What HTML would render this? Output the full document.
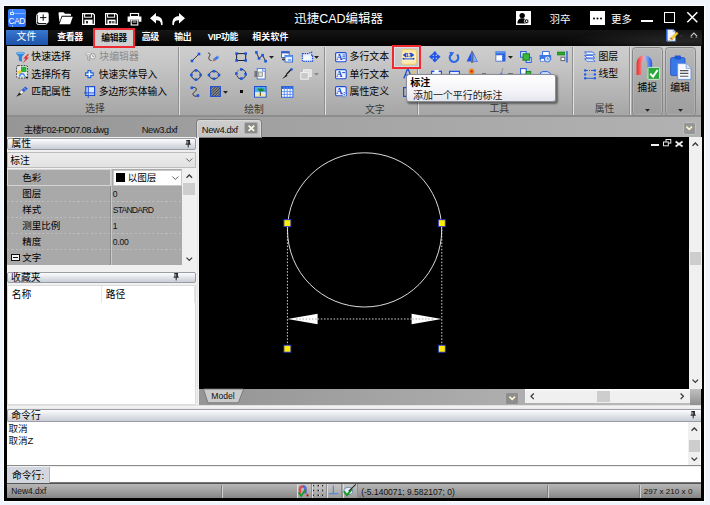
<!DOCTYPE html>
<html lang="zh-CN">
<head>
<meta charset="utf-8">
<title>迅捷CAD编辑器</title>
<style>
html,body{margin:0;padding:0;}
body{width:710px;height:505px;overflow:hidden;background:#f0f4fd;position:relative;
 font-family:"Liberation Sans","Noto Sans CJK SC",sans-serif;font-size:10px;color:#000;}
.a{position:absolute;box-sizing:border-box;}
.t{position:absolute;white-space:nowrap;line-height:14px;}
svg{overflow:visible;}
.hdr{background:linear-gradient(#fdfdfe,#e4e7ec 45%,#c9cdd5);border:1px solid #9a9da3;border-radius:2px;}
</style>
</head>
<body>
<div class="a " style="left:3.9px;top:5.9px;width:700px;height:494.7px;background:#000;box-shadow:0 0 0 1.200px #fff;"></div>
<div class="a " style="left:6px;top:6px;width:695.5px;height:24px;background:#000;"></div>
<div class="a " style="left:6px;top:30px;width:695.5px;height:16px;background:linear-gradient(#151515,#030303);"></div>
<div class="a " style="left:560px;top:30px;width:141.5px;height:16px;background:radial-gradient(ellipse at 85% 70%,rgba(60,60,60,0.6),rgba(0,0,0,0) 70%);"></div>
<div class="a " style="left:6.5px;top:45.5px;width:694.7px;height:70px;background:linear-gradient(#cecece,#c6c6c6 25%,#b3b3b3 70%,#a5a5a5);"></div>
<div class="a " style="left:6.5px;top:116px;width:694.7px;height:21.2px;background:linear-gradient(90deg,#969696,#a2a2a2 40%,#b2b2b2);"></div>
<div class="a " style="left:6.5px;top:114.8px;width:694.7px;height:2.4px;background:linear-gradient(#a0a0a0,#878787 35%,#898989 65%,#969696);"></div>
<div class="a " style="left:6.5px;top:137.2px;width:192px;height:271px;background:#f0f0f0;"></div>
<div class="a " style="left:199px;top:137.2px;width:490px;height:252px;background:#000;"></div>
<div class="a " style="left:689px;top:137.2px;width:13px;height:252px;background:#f0f0f0;"></div>
<div class="a " style="left:199px;top:389.2px;width:502.2px;height:16px;background:linear-gradient(90deg,#959595,#a9a9a9 50%,#bdbdbd);"></div>
<div class="a " style="left:6.5px;top:404.7px;width:694.7px;height:79.3px;background:#f0f0f0;"></div>
<div class="a " style="left:6.5px;top:484px;width:694.7px;height:14.3px;background:linear-gradient(#b6b6b6,#a0a0a0 50%,#858585);"></div>
<div class="a " style="left:8px;top:9px;width:18px;height:18px;background:linear-gradient(#3a86ff,#2a6cf0);border-radius:2px;"></div>
<div class="a " style="left:10.4px;top:11.8px;width:3.6px;height:3.6px;border:1px solid #d6e6ff;"></div>
<div class="a " style="left:14px;top:13.2px;width:11px;height:1px;background:#7fb0ff;"></div>
<div class="a " style="left:11.7px;top:9.4px;width:1px;height:2.4px;background:#7fb0ff;"></div>
<div class="a " style="left:11.7px;top:24.6px;width:1px;height:2.0px;background:#7fb0ff;"></div>
<div class="t " style="left:8.6px;top:13.8px;font-size:8.4px;color:#fff;letter-spacing:-0.450px;">CAD</div>
<svg class="a" style="left:36px;top:12px" width="13" height="13" viewBox="0 0 13 13"><rect x="0.600" y="2" width="10.400" height="10.400" rx="1.500" fill="none" stroke="#fff" stroke-width="0.900"/><rect x="1.700" y="0.200" width="11" height="10.700" rx="1.700" fill="#fff"/><path d="M7.200 2.400v6.400M4 5.600h6.400" stroke="#000" stroke-width="0.950"/></svg>
<svg class="a" style="left:58px;top:12px" width="15" height="13" viewBox="0 0 15 13"><path d="M0.5 1.2q0-1 1-1h4l1.5 1.6h5.2q0.8 0 0.8 0.8v1.2h-9.3l-2.2 6.5z" fill="#fff"/><path d="M4.2 4.8h10.6l-2.6 7.4h-10.8z" fill="#fff"/></svg>
<svg class="a" style="left:82px;top:13px" width="13" height="12" viewBox="0 0 13 12"><path d="M0.6 0.6h10.4l1.4 1.4v9.4h-11.8z" fill="none" stroke="#fff" stroke-width="1.2"/><rect x="2.6" y="0.6" width="7" height="3.6" fill="none" stroke="#fff" stroke-width="1"/><rect x="2.4" y="6.6" width="8.2" height="4.8" fill="#fff"/><rect x="4.2" y="8" width="1.6" height="2.4" fill="#000"/></svg>
<svg class="a" style="left:105px;top:13px" width="13" height="12" viewBox="0 0 13 12"><path d="M0.6 0.6h10.4l1.4 1.4v9.4h-11.8z" fill="none" stroke="#fff" stroke-width="1.2"/><rect x="2.6" y="0.6" width="7" height="3.6" fill="none" stroke="#fff" stroke-width="1"/><rect x="2.4" y="6.6" width="8.2" height="4.8" fill="#fff"/><rect x="4.2" y="8" width="1.6" height="2.4" fill="#000"/><rect x="6.6" y="8" width="3" height="2.4" fill="#000" opacity="0.6"/></svg>
<svg class="a" style="left:127px;top:13px" width="15" height="13" viewBox="0 0 15 13"><rect x="3.4" y="0.5" width="8.2" height="3" fill="none" stroke="#fff" stroke-width="1.1"/><path d="M0.6 3.6h13.8v5.2h-2.6v-2.4h-8.6v2.4h-2.6z" fill="#fff"/><rect x="4.2" y="7" width="6.6" height="5" fill="none" stroke="#fff" stroke-width="1.1"/><path d="M5.6 9h3.8" stroke="#fff" stroke-width="0.9"/></svg>
<svg class="a" style="left:150px;top:13px" width="13" height="13" viewBox="0 0 13 13"><path d="M0 5.2L6 0v3.2c4.6 0 7 2.6 6.6 8.6c-0.6 0.6-1.2 0.6-1.6 0c0-3.4-1.6-4.8-5-4.6v3.4z" fill="#fff"/></svg>
<svg class="a" style="left:171.5px;top:13px;transform:scaleX(-1)" width="13" height="13" viewBox="0 0 13 13"><path d="M0 5.2L6 0v3.2c4.6 0 7 2.6 6.6 8.6c-0.6 0.6-1.2 0.6-1.6 0c0-3.4-1.6-4.8-5-4.6v3.4z" fill="#fff"/></svg>
<div class="t " style="left:294.2px;top:12.1px;font-size:12.5px;color:#fff;">迅捷CAD编辑器</div>
<div class="a " style="left:516.3px;top:11.2px;width:14.7px;height:14px;background:#fff;"></div>
<svg class="a" style="left:516.3px;top:11.2px" width="14.7" height="14" viewBox="0 0 14.7 14"><circle cx="6.2" cy="4.6" r="2.7" fill="#000"/><path d="M1.4 12.6c0-4 2-5.4 4.8-5.4s4.6 1.4 4.6 5.4z" fill="#000"/><circle cx="10.6" cy="10.2" r="2.3" fill="#000" stroke="#fff" stroke-width="0.8"/><circle cx="10.6" cy="10.2" r="0.9" fill="#fff"/></svg>
<div class="t " style="left:549.5px;top:11.9px;font-size:10.5px;color:#fff;">羽卒</div>
<div class="a " style="left:590px;top:11.2px;width:15px;height:14px;background:#fff;"></div>
<svg class="a" style="left:590px;top:11.2px" width="15" height="14" viewBox="0 0 15 14"><circle cx="4" cy="7.4" r="1" fill="#000"/><circle cx="7.5" cy="7.4" r="1" fill="#000"/><circle cx="11" cy="7.4" r="1" fill="#000"/></svg>
<div class="t " style="left:611px;top:11.9px;font-size:10.5px;color:#fff;">更多</div>
<div class="a " style="left:641.4px;top:19.8px;width:11.6px;height:1.9px;background:#fff;"></div>
<div class="a " style="left:664px;top:12.3px;width:11.2px;height:10.8px;border:1.9px solid #fff;"></div>
<svg class="a" style="left:687px;top:12.4px" width="10.6" height="10.6" viewBox="0 0 10.6 10.6"><path d="M0.3 0.3l10 10M10.3 0.3l-10 10" stroke="#fff" stroke-width="1.5"/></svg>
<div class="a " style="left:6.3px;top:29.6px;width:41.6px;height:15.4px;background:linear-gradient(#3a78d0,#2a63bc 50%,#1f55aa);"></div>
<div class="t " style="left:16.6px;top:30.3px;font-size:9.8px;color:#fff;">文件</div>
<div class="t " style="left:57.2px;top:30.4px;font-size:8.9px;color:#fff;font-weight:bold;letter-spacing:-0.3px;">查看器</div>
<div class="a " style="left:93.4px;top:28px;width:41.6px;height:19.6px;background:#cfcfcf;border:2px solid #ee2a32;"></div>
<div class="t " style="left:101.2px;top:30.5px;font-size:8.9px;color:#111;font-weight:bold;letter-spacing:-0.3px;">编辑器</div>
<div class="t " style="left:141.8px;top:30.4px;font-size:8.9px;color:#fff;font-weight:bold;letter-spacing:-0.3px;">高级</div>
<div class="t " style="left:174.3px;top:30.4px;font-size:8.9px;color:#fff;font-weight:bold;letter-spacing:-0.3px;">输出</div>
<div class="t " style="left:207.8px;top:30.4px;font-size:8.9px;color:#fff;font-weight:bold;letter-spacing:-0.4px;">VIP功能</div>
<div class="t " style="left:252.2px;top:30.4px;font-size:8.9px;color:#fff;font-weight:bold;letter-spacing:0.250px;">相关软件</div>
<svg class="a" style="left:665.8px;top:28.8px" width="12" height="13" viewBox="0 0 12 13"><path d="M0.600 0.400h6.600l2.400 2.400v9.400h-9z" fill="#eef3fc" stroke="#3a6fd0" stroke-width="0.700"/><path d="M0.900 0.600v11.400" stroke="#2a5fd0" stroke-width="1.300"/><path d="M7.200 0.400v2.400h2.400" fill="#c8d8f4" stroke="#6a8fd0" stroke-width="0.500"/><path d="M2.800 12.400l1.200-3l6.800-6.400l1.400 1.600l-6.600 6.600z" fill="#f6cf2a" stroke="#c89a10" stroke-width="0.400"/><path d="M2.800 12.400l1.200-3l1.600 1.800z" fill="#f4f4f4"/><path d="M4.600 8.800l1.600 1.800" stroke="#d82020" stroke-width="1"/><path d="M2.600 12.600l0.700-1.300l0.700 0.700z" fill="#2a4fb0"/></svg>
<svg class="a" style="left:678.8px;top:34.8px" width="5" height="3" viewBox="0 0 5 3"><path d="M0 0h5l-2.500 2.600z" fill="#2c2c2c"/></svg>
<svg class="a" style="left:689.6px;top:31.8px" width="8" height="6.4" viewBox="0 0 8 6.4"><path d="M0.700 4.400l3.200-3.400l3.200 3.400" fill="none" stroke="#d8d8d8" stroke-width="1.100"/><path d="M0.600 5.300h2M5.400 5.300h1.900" stroke="#aaa" stroke-width="0.800"/></svg>
<svg class="a" style="left:15.8px;top:51.6px" width="13.4" height="11.4" viewBox="0 0 13.4 11.4"><path d="M0.300 1.200h8.200l-2.900 3.600v4.600l-2.400-1.200v-3.400z" fill="#2a86e4" stroke="#1a5fc0" stroke-width="0.500"/><ellipse cx="4.400" cy="1.200" rx="4" ry="1" fill="#7cc8ff" stroke="#1a6fd0" stroke-width="0.400"/><path d="M11.600 2.200l-4.200 4.400h2.400l-3 4.600l6.200-5.800h-2.600l2.800-3.200z" fill="#e8222c"/></svg>
<div class="t " style="left:31.3px;top:50.3px;font-size:9.9px;color:#000;">快速选择</div>
<svg class="a" style="left:15.8px;top:65.3px" width="13" height="14" viewBox="0 0 13 14"><rect x="0.600" y="0.600" width="11" height="12.400" rx="1.400" fill="#e9e9e9" stroke="#2a2a2a" stroke-width="0.900" stroke-dasharray="1.700 1.100"/><rect x="5" y="1.800" width="5.400" height="5.200" fill="#2fae3c"/><circle cx="3.800" cy="7.200" r="1.900" fill="#f6cc2e"/><path d="M2.600 11.800c0.400-2.600 1.800-4 3.400-4s3 1.400 3.400 4z" fill="#4a90ee"/><path d="M4.400 11.800c0.300-1.400 1-2.200 1.800-2.200s1.500 0.800 1.800 2.200z" fill="#eef4ff"/><path d="M9 11.400l3.600 0.800l-1.300 0.900l0.300 1.500z" fill="#111"/></svg>
<div class="t " style="left:31.3px;top:67.7px;font-size:9.9px;color:#000;">选择所有</div>
<svg class="a" style="left:15.8px;top:86px" width="12.4" height="11" viewBox="0 0 12.4 11"><path d="M0.300 10.700l3-4.300l2.300 1.900z" fill="#222"/><path d="M3.300 6.400l2.300-2.400l2.300 1.900l-2.300 2.400z" fill="#f2f2f2" stroke="#555" stroke-width="0.500"/><path d="M5.600 4l3.600-3.600l2.700 2.300l-4 3.200z" fill="#2a5fd8"/><path d="M7.600 2l2.600 2.200" stroke="#9fc0ff" stroke-width="0.700"/></svg>
<div class="t " style="left:31.3px;top:85.2px;font-size:9.9px;color:#000;">匹配属性</div>
<svg class="a" style="left:84.6px;top:51.8px" width="11" height="10.6" viewBox="0 0 11 10.6"><path d="M0.300 1.400h6.600l-2.300 3v4.400l-2-1v-3.400z" fill="#cfcfcf" stroke="#8a8a8a" stroke-width="0.600"/><ellipse cx="3.600" cy="1.400" rx="3.200" ry="0.900" fill="#ececec" stroke="#999" stroke-width="0.400"/><circle cx="7.800" cy="4.400" r="2.700" fill="#f2f2f2" stroke="#8c8c8c" stroke-width="0.800"/><path d="M7.800 2.900v1.700h1.400" stroke="#777" stroke-width="0.700" fill="none"/></svg>
<div class="t " style="left:99.3px;top:50.3px;font-size:9.9px;color:#8c8c8c;">块编辑器</div>
<svg class="a" style="left:85.0px;top:70.3px" width="8.8" height="8.4" viewBox="0 0 8.8 8.4"><path d="M3 0.700h2.800v2.200h2.400v2.600h-2.400v2.200h-2.800v-2.200h-2.400v-2.600h2.400z" fill="#f4f8ff" stroke="#1f5fe0" stroke-width="1.150"/></svg>
<div class="t " style="left:98.7px;top:67.7px;font-size:9.75px;color:#000;">快速实体导入</div>
<svg class="a" style="left:84.2px;top:86.4px" width="11.4" height="12" viewBox="0 0 11.4 12"><rect x="1.800" y="0.600" width="8.800" height="8.800" fill="#dbe7ff" stroke="#1f4fd8" stroke-width="1.200"/><path d="M4.300 0.600v11.200M0 6.900h10.600" stroke="#1f4fd8" stroke-width="1"/></svg>
<div class="t " style="left:98.7px;top:85.2px;font-size:9.75px;color:#000;">多边形实体输入</div>
<div class="t " style="left:85.3px;top:102.1px;font-size:9.8px;color:#3a3a3a;">选择</div>
<div class="a " style="left:177.9px;top:46.5px;width:1px;height:68.5px;background:#8f8f8f;"></div><div class="a " style="left:178.9px;top:46.5px;width:1px;height:68.5px;background:#e2e2e2;"></div>
<svg class="a" style="left:190.4px;top:51.5px" width="11" height="11" viewBox="0 0 11 11"><path d="M2 8.900l7-6.900" stroke="#222" stroke-width="0.900"/><rect x="0.7" y="7.6" width="2.6" height="2.6" fill="#1b55e2"/><rect x="7.7" y="0.7" width="2.6" height="2.6" fill="#1b55e2"/></svg>
<svg class="a" style="left:207px;top:51.5px" width="14" height="11" viewBox="0 0 14 11"><path d="M0.900 0.900c2.600 0.200 2.400 2.200 1.400 3.600s-0.600 4 2.200 4" fill="none" stroke="#222" stroke-width="0.900"/><path d="M6.400 6.800l4.200-3.400l1.800 2l-4.200 3.400z" fill="#3d7ae8"/><path d="M10 3.800l1.900 2" stroke="#9fc4ff" stroke-width="0.600"/><path d="M6.400 6.800l1.800 2l-2.600 0.800z" fill="#e85050"/></svg>
<svg class="a" style="left:234.6px;top:51.9px" width="12.4" height="10.4" viewBox="0 0 12.4 10.4"><rect x="1.600" y="1.600" width="9.100" height="6.900" fill="none" stroke="#222" stroke-width="1"/><rect x="0.3" y="0.3" width="2.6" height="2.6" fill="#1b55e2"/><rect x="9.4" y="0.3" width="2.6" height="2.6" fill="#1b55e2"/><rect x="0.3" y="7.2" width="2.6" height="2.6" fill="#1b55e2"/><rect x="9.4" y="7.2" width="2.6" height="2.6" fill="#1b55e2"/></svg>
<svg class="a" style="left:254.8px;top:51.0px" width="12" height="12" viewBox="0 0 12 12"><path d="M1.4 1.4l2.600 6l3.600-3.200l3 6" fill="none" stroke="#222" stroke-width="0.9"/><rect x="0.1" y="0.1" width="2.6" height="2.6" fill="#1b55e2"/><rect x="2.7" y="6.1" width="2.6" height="2.6" fill="#1b55e2"/><rect x="6.3" y="2.9" width="2.6" height="2.6" fill="#1b55e2"/><rect x="9.3" y="8.9" width="2.6" height="2.6" fill="#1b55e2"/></svg>
<svg class="a" style="left:268.5px;top:55.599999999999994px" width="5" height="3" viewBox="0 0 5 3"><path d="M0 0h5l-2.5 2.8z" fill="#222"/></svg>
<svg class="a" style="left:280.8px;top:51.0px" width="12.4" height="11.6" viewBox="0 0 12.4 11.6"><rect x="0.6" y="0.6" width="7.600" height="6" fill="#fff" stroke="#2a5fd0" stroke-width="0.9"/><rect x="0.6" y="0.6" width="7.600" height="1.800" fill="#2a5fd0"/><rect x="5.600" y="1.2" width="1.600" height="1" fill="#e03030"/><rect x="4" y="4.400" width="7.600" height="6.600" fill="#fff" stroke="#2a5fd0" stroke-width="0.9"/><rect x="4" y="4.400" width="7.600" height="1.800" fill="#5b9bf0"/><path d="M1.800 8.400h2.200M2.600 7.200l-1.400 1.200l1.400 1.200" stroke="#222" stroke-width="0.9" fill="none"/><rect x="6.800" y="7.800" width="3.600" height="2.200" fill="#7db4f4"/></svg>
<svg class="a" style="left:300.8px;top:51.0px" width="12.4" height="11.6" viewBox="0 0 12.4 11.6"><path d="M1.4 2.600h5.600l3.600-1.400v3.600h1v5.600h-10.200z" fill="#dfe9ff" stroke="#1f4fd0" stroke-width="1.2" stroke-dasharray="1.4 0.9"/><rect x="2.600" y="4.400" width="6.400" height="4.400" fill="#f4f8ff"/></svg>
<svg class="a" style="left:314.2px;top:55.599999999999994px" width="5" height="3" viewBox="0 0 5 3"><path d="M0 0h5l-2.5 2.8z" fill="#222"/></svg>
<svg class="a" style="left:190.1px;top:68.7px" width="12" height="12" viewBox="0 0 12 12"><circle cx="6" cy="6" r="4.6" fill="none" stroke="#222" stroke-width="0.9"/><rect x="4.7" y="0.1" width="2.6" height="2.6" fill="#1b55e2"/><rect x="4.7" y="9.3" width="2.6" height="2.6" fill="#1b55e2"/><rect x="0.1" y="4.7" width="2.6" height="2.6" fill="#1b55e2"/><rect x="9.3" y="4.7" width="2.6" height="2.6" fill="#1b55e2"/></svg>
<svg class="a" style="left:207.6px;top:68.7px" width="12" height="12" viewBox="0 0 12 12"><ellipse cx="6" cy="6" rx="5" ry="3.800" fill="none" stroke="#222" stroke-width="0.9"/><rect x="4.7" y="0.9" width="2.6" height="2.6" fill="#1b55e2"/><rect x="4.7" y="8.5" width="2.6" height="2.6" fill="#1b55e2"/><rect x="-0.3" y="4.7" width="2.6" height="2.6" fill="#1b55e2"/><rect x="9.7" y="4.7" width="2.6" height="2.6" fill="#1b55e2"/></svg>
<svg class="a" style="left:235.0px;top:68.4px" width="12" height="12" viewBox="0 0 12 12"><path d="M6.200 1.400a4.600 4.600 0 1 1-4.400 6" fill="none" stroke="#222" stroke-width="0.9"/><path d="M1.400 5a4.600 4.600 0 0 1 2.600-3" fill="none" stroke="#222" stroke-width="0.9" stroke-dasharray="1.2 1"/><rect x="4.9" y="0.1" width="2.6" height="2.6" fill="#1b55e2"/><rect x="0.1" y="4.3" width="2.6" height="2.6" fill="#1b55e2"/><rect x="9.3" y="4.9" width="2.6" height="2.6" fill="#1b55e2"/><rect x="5.1" y="9.3" width="2.6" height="2.6" fill="#1b55e2"/></svg>
<svg class="a" style="left:254.0px;top:68.4px" width="12" height="11.6" viewBox="0 0 12 11.6"><rect x="3.200" y="0.6" width="8" height="10.400" fill="#fdfdfd" stroke="#3a6fd8" stroke-width="0.9"/><path d="M8.600 0.600v2.600h2.600" fill="#cfe0fa" stroke="#3a6fd8" stroke-width="0.7"/><rect x="4.600" y="4" width="4" height="4.600" fill="#d8d8d8" stroke="#777" stroke-width="0.6"/><path d="M0.400 4h2.600M0.400 6h2.600M0.400 8h2.600" stroke="#222" stroke-width="0.9"/></svg>
<svg class="a" style="left:281.0px;top:68.2px" width="12" height="12" viewBox="0 0 12 12"><path d="M1.200 11l4-4.400l1.400 1.200z" fill="#111"/><path d="M5.200 6.600l5.400-5.600" stroke="#111" stroke-width="1.300"/><rect x="9.5" y="0.3" width="2.2" height="2.2" fill="#1b55e2"/></svg>
<svg class="a" style="left:300.4px;top:68.7px" width="12" height="11" viewBox="0 0 12 11"><rect x="3.600" y="0.800" width="7.600" height="6.600" fill="#dedede" stroke="#f2f2f2" stroke-width="1"/><rect x="0.800" y="3.600" width="7.600" height="6.600" fill="#c8c8c8" stroke="#f0f0f0" stroke-width="1"/></svg>
<svg class="a" style="left:314.2px;top:73.0px" width="5" height="3" viewBox="0 0 5 3"><path d="M0 0h5l-2.5 2.8z" fill="#8a8a8a"/></svg>
<svg class="a" style="left:189.6px;top:85.7px" width="10" height="12" viewBox="0 0 10 12"><path d="M2 1.600c4.800-1 5.600 2.200 2.600 4.200s-1.600 5.200 2.600 4.200" fill="none" stroke="#222" stroke-width="0.9"/><rect x="0.5" y="0.5" width="2.6" height="2.6" fill="#1b55e2"/><rect x="6.7" y="8.3" width="2.6" height="2.6" fill="#1b55e2"/></svg>
<svg class="a" style="left:210.0px;top:86.2px" width="11" height="11" viewBox="0 0 11 11"><defs><pattern id="hp" width="2" height="2" patternUnits="userSpaceOnUse" patternTransform="rotate(45)"><rect width="2" height="2" fill="#9a9a9a"/><rect width="1" height="2" fill="#444"/></pattern></defs><rect x="0.600" y="0.600" width="9.800" height="9.800" fill="url(#hp)" stroke="#1f4fd0" stroke-width="1.100"/></svg>
<svg class="a" style="left:223.0px;top:90.5px" width="5" height="3" viewBox="0 0 5 3"><path d="M0 0h5l-2.5 2.8z" fill="#222"/></svg>
<div class="a " style="left:240px;top:90.3px;width:3.2px;height:3.2px;background:#0a0a0a;"></div>
<svg class="a" style="left:253.7px;top:85.9px" width="12.6" height="11.6" viewBox="0 0 12.6 11.6"><rect x="0.500" y="0.500" width="11.600" height="10.600" fill="#4fb0f0" stroke="#1f4fd0" stroke-width="1"/><rect x="1" y="7.600" width="10.600" height="3" fill="#f4e8b0"/><rect x="1" y="6.200" width="10.600" height="1.600" fill="#e8f6ff"/><path d="M6.300 10v-4.600" stroke="#5a3a1a" stroke-width="1"/><path d="M6.300 5.200l-4-1.600l2.600-0.400l-1.200-1.800l2.600 1.600l1-2l0.800 2l2.600-1l-1.600 2l2.200 0.800l-3.600 0.400z" fill="#188a2a"/></svg>
<svg class="a" style="left:280.8px;top:85.8px" width="12.4" height="11.8" viewBox="0 0 12.4 11.8"><rect x="0.500" y="0.500" width="11.400" height="10.800" fill="#fff" stroke="#2a63e0" stroke-width="1"/><rect x="0.500" y="0.500" width="11.400" height="2.400" fill="#2a63e0"/><path d="M3.300 1v10.200M6.200 1v10.200M9.100 1v10.200M1 5.600h10.800M1 8.400h10.800" stroke="#5a8cf0" stroke-width="0.900"/></svg>
<div class="t " style="left:244.2px;top:102.5px;font-size:9.8px;color:#3a3a3a;">绘制</div>
<div class="a " style="left:323.7px;top:46.5px;width:1px;height:68.5px;background:#8f8f8f;"></div><div class="a " style="left:324.7px;top:46.5px;width:1px;height:68.5px;background:#e2e2e2;"></div>
<svg class="a" style="left:334.9px;top:51.5px" width="11.8" height="10.4" viewBox="0 0 11.8 10.4"><rect x="0.600" y="0.600" width="10.600" height="9.200" rx="1.200" fill="#f2f6ff" stroke="#1f4fd0" stroke-width="1.100"/><text x="1.300" y="8.200" font-size="8.600" font-weight="bold" font-family="Liberation Serif,serif" fill="#1a45d0">A</text><path d="M7.400 3h2.800M7.400 4.800h2.800M7.400 6.600h2.800" stroke="#1f4fd0" stroke-width="0.900"/></svg>
<div class="t " style="left:349.5px;top:50.3px;font-size:9.9px;color:#000;">多行文本</div>
<svg class="a" style="left:334.9px;top:68.9px" width="11.8" height="10.4" viewBox="0 0 11.8 10.4"><rect x="0.600" y="0.600" width="10.600" height="9.200" rx="1.200" fill="#f2f6ff" stroke="#1f4fd0" stroke-width="1.100"/><text x="1.300" y="8.200" font-size="8.600" font-weight="bold" font-family="Liberation Serif,serif" fill="#1a45d0">A</text><path d="M7.200 3.600h3" stroke="#1f4fd0" stroke-width="1"/></svg>
<div class="t " style="left:349.5px;top:67.7px;font-size:9.9px;color:#000;">单行文本</div>
<svg class="a" style="left:334.9px;top:86.4px" width="11.8" height="10.4" viewBox="0 0 11.8 10.4"><rect x="0.600" y="0.600" width="10.600" height="9.200" rx="1.200" fill="#f2f6ff" stroke="#1f4fd0" stroke-width="1.100"/><text x="1.300" y="8.200" font-size="8.600" font-weight="bold" font-family="Liberation Serif,serif" fill="#1a45d0">A</text><circle cx="9.200" cy="8.800" r="2.200" fill="#dce8ff" stroke="#1f4fd0" stroke-width="1" stroke-dasharray="1.100 0.700"/><circle cx="9.200" cy="8.800" r="0.700" fill="#1f4fd0"/></svg>
<div class="t " style="left:349.5px;top:85.2px;font-size:9.9px;color:#000;">属性定义</div>
<div class="t " style="left:365px;top:102.5px;font-size:9.8px;color:#3a3a3a;">文字</div>
<svg class="a" style="left:403px;top:69px" width="12" height="10" viewBox="0 0 12 10"><path d="M0.800 9.400l3.400-8.800h1.200l3.400 8.800M2.200 6.200h5" fill="none" stroke="#1f4fd0" stroke-width="1.300"/><path d="M7.400 6.400l3.800-4.400l1 0.800l-3.800 4.400z" fill="#f4c430"/></svg>
<svg class="a" style="left:402.6px;top:86.6px" width="6" height="10" viewBox="0 0 6 10"><path d="M5 0.600h-4.400v8.800h4.400" fill="none" stroke="#1f4fd0" stroke-width="1.200"/></svg>
<div class="a " style="left:392.1px;top:45.1px;width:28.8px;height:23.7px;border:2px solid #f02830;box-shadow:inset 0 0 0 1px rgba(225,235,240,0.6);"></div>
<div class="a " style="left:401px;top:49px;width:15.6px;height:16px;background:linear-gradient(#fbe6a4,#fdeebc 45%,#fdf0c4 70%,#fae4a0);border:1px solid #f0cd74;border-radius:3px;"></div>
<svg class="a" style="left:402.3px;top:51.4px" width="13" height="10" viewBox="0 0 13 10"><path d="M0.700 4.100l3.500-2.600v5.200zM12.300 4.100l-3.500-2.600v5.200z" fill="#1a45d8"/><path d="M1.300 7.900h10.400" stroke="#1a45d8" stroke-width="1"/><circle cx="1.400" cy="7.700" r="0.900" fill="#1a45d8"/><circle cx="11.600" cy="7.700" r="0.900" fill="#1a45d8"/><text x="6.500" y="6.300" font-size="6" font-family="Liberation Sans,sans-serif" font-weight="bold" text-anchor="middle" fill="#1a45d8" letter-spacing="-0.4">17</text></svg>
<div class="a " style="left:417.0px;top:68.7px;width:1px;height:46.3px;background:#8f8f8f;"></div><div class="a " style="left:418.0px;top:68.7px;width:1px;height:46.3px;background:#e2e2e2;"></div>
<svg class="a" style="left:429.2px;top:51px" width="11.6" height="11.6" viewBox="0 0 11.6 11.6"><path d="M5.800 0l3.300 3.700h-6.600zM5.800 11.600l3.300-3.700h-6.600zM0 5.800l3.700-3.300v6.600zM11.600 5.800l-3.700-3.300v6.600z" fill="#1f55e8"/><path d="M5.800 3v5.600M3 5.800h5.600" stroke="#1f55e8" stroke-width="1.700"/></svg>
<svg class="a" style="left:447.6px;top:50.6px" width="12" height="12" viewBox="0 0 12 12"><path d="M3.200 3.400a4.300 4.300 0 1 0 5.800 0.200" fill="none" stroke="#2a66ea" stroke-width="2.100"/><path d="M1.200 1l5 0.300l-2.600 4z" fill="#2a66ea"/></svg>
<svg class="a" style="left:466.0px;top:50.8px" width="12" height="12" viewBox="0 0 12 12"><path d="M6 0v12" stroke="#111" stroke-width="0.9"/><path d="M5 1.600v9h-4.400z" fill="#1f55e8"/><path d="M7 1.600v9h4.400z" fill="#8ab4f6" stroke="#1f55e8" stroke-width="0.600"/></svg>
<svg class="a" style="left:494.5px;top:51.3px" width="11" height="11" viewBox="0 0 11 11"><rect x="0.500" y="0.500" width="10" height="10" fill="#2a63e0"/><rect x="0.500" y="0.500" width="10" height="2" fill="#5a90f0"/><rect x="1.400" y="4.400" width="5.600" height="5.200" fill="#fff" stroke="#eee" stroke-width="0.800" stroke-dasharray="1 0.800"/></svg>
<svg class="a" style="left:508.2px;top:55.599999999999994px" width="5" height="3" viewBox="0 0 5 3"><path d="M0 0h5l-2.5 2.8z" fill="#222"/></svg>
<svg class="a" style="left:520.0px;top:50.8px" width="12" height="12" viewBox="0 0 12 12"><rect x="0.600" y="0.600" width="5.600" height="5.600" fill="#e8f0ff" stroke="#1f55e8" stroke-width="1"/><rect x="6.200" y="6.400" width="5" height="5" fill="#e8f0ff" stroke="#1f55e8" stroke-width="1"/><rect x="3" y="2.800" width="6.400" height="6.400" fill="#3ab83a" stroke="#0a7a1a" stroke-width="0.900"/></svg>
<svg class="a" style="left:538.7px;top:51.0px" width="12.6" height="11.6" viewBox="0 0 12.6 11.6"><rect x="3.600" y="0.600" width="6.600" height="4" fill="#fff" stroke="#2a63e0" stroke-width="0.900"/><path d="M0.600 4h11.600v5h-11.600z" fill="#3a78e8"/><rect x="1.600" y="7.600" width="4" height="2.600" fill="#fff" stroke="#2a63e0" stroke-width="0.600"/><circle cx="8.400" cy="8" r="3" fill="#cfe0fa" stroke="#2a63e0" stroke-width="0.900"/><path d="M8.400 6.400v1.800h1.400" stroke="#2a63e0" stroke-width="0.700" fill="none"/></svg>
<svg class="a" style="left:557.3px;top:50.8px" width="11" height="12" viewBox="0 0 11 12"><rect x="0.400" y="1" width="7.400" height="3" fill="#2aa82a" stroke="#0a7a1a" stroke-width="0.600"/><rect x="4" y="6.200" width="3.800" height="3.400" fill="#fff" stroke="#666" stroke-width="1"/><path d="M10 0v11.600" stroke="#1f55e8" stroke-width="1.300"/></svg>
<svg class="a" style="left:430.5px;top:69.6px" width="11" height="6" viewBox="0 0 11 6"><path d="M0.600 6v-4.600h9.800v4.600" fill="#e8f0ff" stroke="#1f55e8" stroke-width="1.200"/><rect x="3.400" y="0" width="4.200" height="2.400" fill="#fff"/></svg>
<svg class="a" style="left:448.5px;top:69.6px" width="11" height="6" viewBox="0 0 11 6"><path d="M0.600 6v-4.600h9.800v4.600" fill="#e8f0ff" stroke="#1f55e8" stroke-width="1.200"/></svg>
<svg class="a" style="left:467.5px;top:68.4px" width="9" height="7" viewBox="0 0 9 7"><circle cx="3.600" cy="3.400" r="2.800" fill="#f08a1a"/><circle cx="3.600" cy="3.400" r="1.200" fill="#e02020"/><path d="M3 7h6" stroke="#2a63e0" stroke-width="1.200"/></svg>
<div class="a " style="left:481.6px;top:73.4px;width:4.6px;height:1.4px;background:#777;"></div>
<svg class="a" style="left:497px;top:68.2px" width="9" height="7" viewBox="0 0 9 7"><path d="M6 0l-1.600 5" stroke="#888" stroke-width="0.800"/><path d="M2 7l2.400-1.800l2 1.800M0 7h9" stroke="#2a63e0" stroke-width="1" fill="none"/></svg>
<div class="a " style="left:508.4px;top:73.4px;width:4.6px;height:1.4px;background:#777;"></div>
<svg class="a" style="left:520.4px;top:67.6px" width="12" height="8" viewBox="0 0 12 8"><rect x="0.600" y="0.600" width="5.600" height="5.600" fill="#fff" stroke="#1f55e8" stroke-width="1"/><rect x="6.200" y="3.400" width="4.600" height="5" fill="#3ab83a" stroke="#0a7a1a" stroke-width="0.800"/></svg>
<svg class="a" style="left:540px;top:70.6px" width="11" height="5" viewBox="0 0 11 5"><path d="M0.600 5v-3.400l2-1h5l3 2v2.400" fill="#cfe0fa" stroke="#2a63e0" stroke-width="1"/></svg>
<div class="t " style="left:489.4px;top:102.0px;font-size:9.8px;color:#3a3a3a;">工具</div>
<div class="a " style="left:572.0px;top:46.5px;width:1px;height:68.5px;background:#8f8f8f;"></div><div class="a " style="left:573.0px;top:46.5px;width:1px;height:68.5px;background:#e2e2e2;"></div>
<svg class="a" style="left:584px;top:51px" width="11.6" height="11.6" viewBox="0 0 11.6 11.6"><g fill="#f4f8ff" stroke="#2a5fe0" stroke-width="0.900" stroke-linejoin="round"><path d="M0.600 7.800h8l2.400 2.600h-8z"/><path d="M0.600 4.400h8l2.400 2.600h-8z"/><path d="M0.600 1h8l2.400 2.600h-8z"/></g><path d="M3 3.600h8M3 7h8M3 10.400h8" stroke="#7f9fe8" stroke-width="0.800"/></svg>
<div class="t " style="left:598.4px;top:50.1px;font-size:9.9px;color:#000;">图层</div>
<svg class="a" style="left:583.6px;top:68.6px" width="12" height="10.8" viewBox="0 0 12 10.8"><path d="M1 1.500h10" stroke="#2a5fe0" stroke-width="1" stroke-dasharray="3 1 1 1"/><path d="M1 5.400h10" stroke="#7fa4f0" stroke-width="1" stroke-dasharray="1 0.800"/><path d="M1 9.300h10" stroke="#2a5fe0" stroke-width="1"/><rect x="0.1" y="0.4" width="2.1" height="2.1" fill="#1b55e2"/><rect x="9.8" y="0.4" width="2.1" height="2.1" fill="#1b55e2"/><rect x="0.1" y="4.4" width="2.1" height="2.1" fill="#1b55e2"/><rect x="9.8" y="4.4" width="2.1" height="2.1" fill="#1b55e2"/><rect x="0.1" y="8.2" width="2.1" height="2.1" fill="#1b55e2"/><rect x="9.8" y="8.2" width="2.1" height="2.1" fill="#1b55e2"/></svg>
<div class="t " style="left:598.4px;top:67.4px;font-size:9.9px;color:#000;">线型</div>
<div class="t " style="left:594.7px;top:102.0px;font-size:9.8px;color:#3a3a3a;">属性</div>
<div class="a " style="left:629.4px;top:46.5px;width:1px;height:68.5px;background:#8f8f8f;"></div><div class="a " style="left:630.4px;top:46.5px;width:1px;height:68.5px;background:#e2e2e2;"></div>
<div class="a " style="left:632.2px;top:47px;width:30.6px;height:68.6px;background:linear-gradient(#bababa,#acacac 40%,#9e9e9e);border:1px solid #878787;border-radius:3.500px;box-shadow:inset 0 0 0 0.600px rgba(255,255,255,0.25);"></div>
<div class="a " style="left:665.2px;top:47px;width:30.6px;height:68.6px;background:linear-gradient(#bababa,#acacac 40%,#9e9e9e);border:1px solid #878787;border-radius:3.500px;box-shadow:inset 0 0 0 0.600px rgba(255,255,255,0.25);"></div>
<svg class="a" style="left:635.6px;top:55px" width="24" height="25" viewBox="0 0 24 25"><defs><linearGradient id="mg" x1="0" x2="1"><stop offset="0" stop-color="#f02828"/><stop offset="0.450" stop-color="#f8a0a0"/><stop offset="0.550" stop-color="#9ab8f8"/><stop offset="1" stop-color="#1f55e0"/></linearGradient></defs><path d="M0.600 20v-12a7.800 7.800 0 0 1 15.600 0v12h-5v-11.600a2.800 2.800 0 0 0-5.600 0v11.600z" fill="url(#mg)"/><rect x="12" y="12.400" width="11.600" height="12" rx="1" fill="#2aa83a" stroke="#e8f8e8" stroke-width="0.800"/><path d="M14.200 18.600l2.800 3l4.600-6.600" fill="none" stroke="#fff" stroke-width="2"/></svg>
<div class="t " style="left:637.3px;top:80.8px;font-size:9.9px;color:#000;">捕捉</div>
<svg class="a" style="left:644.9px;top:109.0px" width="5" height="3" viewBox="0 0 5 3"><path d="M0 0h5l-2.5 2.8z" fill="#222"/></svg>
<svg class="a" style="left:670px;top:55px" width="22" height="25" viewBox="0 0 22 25"><rect x="0.600" y="2.600" width="14.400" height="18" rx="1.600" fill="#3a78e8" stroke="#1f4fc0" stroke-width="0.800"/><rect x="4.600" y="0.400" width="6.400" height="4" rx="1" fill="#1f55d0"/><path d="M7.600 8.600h8.600l4.800 4.800v11h-13.400z" fill="#f6f9ff" stroke="#6a90d8" stroke-width="0.900"/><path d="M16.200 8.600v4.800h4.800" fill="#d8e4f8" stroke="#6a90d8" stroke-width="0.700"/><path d="M10 15.600h8.400M10 18.400h8.400M10 21.200h8.400" stroke="#555" stroke-width="1.100"/></svg>
<div class="t " style="left:670.2px;top:80.8px;font-size:9.9px;color:#000;">编辑</div>
<svg class="a" style="left:677.9px;top:109.0px" width="5" height="3" viewBox="0 0 5 3"><path d="M0 0h5l-2.5 2.8z" fill="#222"/></svg>
<div class="a " style="left:406.1px;top:74px;width:150.2px;height:27.8px;background:linear-gradient(#ffffff,#f4f4f8 60%,#e6e7ef);border:1px solid #8c8c96;border-radius:3px;box-shadow:1.5px 1.5px 2px rgba(0,0,0,0.45);"></div>
<div class="t " style="left:410.3px;top:76.3px;font-size:10px;color:#000;font-weight:bold;">标注</div>
<div class="t " style="left:413px;top:88.7px;font-size:9.95px;color:#1a1a1a;">添加一个平行的标注</div>
<div class="t " style="left:23.7px;top:122.5px;font-size:9.4px;color:#111;letter-spacing:-0.560px;">主楼F02-PD07.08.dwg</div>
<div class="t " style="left:141.8px;top:122.5px;font-size:9.4px;color:#111;letter-spacing:-0.450px;">New3.dxf</div>
<div class="a " style="left:196.5px;top:119.7px;width:64px;height:17.5px;background:linear-gradient(#cecece,#c3c3c3);border:1px solid #dadada;border-bottom:none;border-radius:3px 3px 0 0;box-shadow:0 0 0 1px #7e7e7e;"></div>
<div class="t " style="left:201.8px;top:122.5px;font-size:9.4px;color:#111;letter-spacing:-0.380px;">New4.dxf</div>
<div class="a " style="left:244.4px;top:121.9px;width:13.2px;height:12.4px;background:#8a8a8a;border:1px solid #b0b0b0;border-radius:2px;"></div>
<svg class="a" style="left:247.6px;top:124.9px" width="6.8" height="6.4" viewBox="0 0 6.8 6.4"><path d="M0.600 0.600l5.600 5.200M6.200 0.600l-5.600 5.200" stroke="#fffbe6" stroke-width="1.700"/></svg>
<div class="a " style="left:683.2px;top:121.9px;width:12.4px;height:12.8px;background:#969696;border:1px solid #c0c0c0;border-radius:2.500px;"></div>
<svg class="a" style="left:686.2px;top:126px" width="6.4" height="4.4" viewBox="0 0 6.4 4.4"><path d="M0.400 0.600l2.800 2.800l2.800-2.800" fill="none" stroke="#fff6d0" stroke-width="1.500"/></svg>
<div class="a hdr" style="left:7.1px;top:138.2px;width:189px;height:11.4px;"></div>
<div class="t " style="left:11.4px;top:137.3px;font-size:9.8px;color:#000;">属性</div>
<svg class="a" style="left:184.6px;top:140px" width="6.4" height="8" viewBox="0 0 6.4 8"><path d="M1.400 0.500h3.600M2 0.500v3.600M4.400 0.500v3.600M3.700 0.500v3.600M0.600 4.200h5.200M3.200 4.200v3.200" stroke="#111" stroke-width="0.900" fill="none"/></svg>
<div class="a " style="left:7.1px;top:151.6px;width:188.6px;height:16.8px;background:linear-gradient(#ececec,#e2e2e2);border:1px solid #bdbdbd;"></div>
<div class="t " style="left:10.3px;top:153.6px;font-size:9.8px;color:#000;">标注</div>
<svg class="a" style="left:185.5px;top:158.4px" width="6.6" height="4.4" viewBox="0 0 6.6 4.4"><path d="M0.300 0.500l3 3l3-3" fill="none" stroke="#5a5a5a" stroke-width="0.950"/></svg>
<div class="a " style="left:7.1px;top:169.4px;width:175.3px;height:96px;background:#a9a9a9;"></div>
<div class="a " style="left:7.1px;top:201.1px;width:175.3px;height:1px;background:repeating-linear-gradient(90deg,#bebebe 0,#bebebe 2.200px,rgba(0,0,0,0) 2.200px,rgba(0,0,0,0) 4.400px);"></div>
<div class="a " style="left:7.1px;top:217.1px;width:175.3px;height:1px;background:repeating-linear-gradient(90deg,#bebebe 0,#bebebe 2.200px,rgba(0,0,0,0) 2.200px,rgba(0,0,0,0) 4.400px);"></div>
<div class="a " style="left:7.1px;top:233.1px;width:175.3px;height:1px;background:repeating-linear-gradient(90deg,#bebebe 0,#bebebe 2.200px,rgba(0,0,0,0) 2.200px,rgba(0,0,0,0) 4.400px);"></div>
<div class="a " style="left:7.1px;top:249.0px;width:175.3px;height:1px;background:repeating-linear-gradient(90deg,#bebebe 0,#bebebe 2.200px,rgba(0,0,0,0) 2.200px,rgba(0,0,0,0) 4.400px);"></div>
<div class="a " style="left:110px;top:169.4px;width:1px;height:96px;background:#8c8c8c;"></div>
<div class="a " style="left:111px;top:169.4px;width:1px;height:96px;background:#cacaca;"></div>
<div class="a " style="left:7.1px;top:169.4px;width:104.2px;height:16.4px;border:1px solid #d4d4d4;"></div>
<div class="t " style="left:22.3px;top:171.4px;font-size:9.5px;color:#000;">色彩</div>
<div class="t " style="left:22.3px;top:187.4px;font-size:9.5px;color:#000;">图层</div>
<div class="t " style="left:22.3px;top:203.4px;font-size:9.5px;color:#000;">样式</div>
<div class="t " style="left:22.3px;top:219.4px;font-size:9.5px;color:#000;">测里比例</div>
<div class="t " style="left:22.3px;top:235.4px;font-size:9.5px;color:#000;">精度</div>
<div class="a " style="left:11.4px;top:253.9px;width:8.4px;height:7.6px;border:1px solid #111;background:#f4f4f4;"></div>
<div class="a " style="left:13.2px;top:257.3px;width:4.8px;height:1px;background:#111;"></div>
<div class="t " style="left:22.3px;top:251.2px;font-size:9.5px;color:#000;">文字</div>
<div class="a " style="left:112.6px;top:170.2px;width:69px;height:15.6px;background:#fff;border:1px solid #c8c8c8;"></div>
<div class="a " style="left:115.8px;top:173px;width:9.2px;height:9.2px;background:#000;"></div>
<div class="t " style="left:127.7px;top:171.3px;font-size:9.6px;color:#000;">以图层</div>
<svg class="a" style="left:171.6px;top:176.2px" width="6.6" height="4.4" viewBox="0 0 6.6 4.4"><path d="M0.300 0.500l3 3l3-3" fill="none" stroke="#5a5a5a" stroke-width="0.950"/></svg>
<div class="t " style="left:112.7px;top:187.3px;font-size:8.6px;color:#111;letter-spacing:-0.200px;">0</div>
<div class="t " style="left:112.7px;top:203.3px;font-size:8.6px;color:#111;letter-spacing:-0.780px;">STANDARD</div>
<div class="t " style="left:112.7px;top:219.3px;font-size:8.6px;color:#111;letter-spacing:-0.200px;">1</div>
<div class="t " style="left:112.7px;top:235.3px;font-size:8.6px;color:#111;letter-spacing:-0.200px;">0.00</div>
<div class="a " style="left:182.4px;top:169.4px;width:13px;height:96px;background:#f0f0f0;"></div>
<svg class="a" style="left:185.6px;top:174.4px" width="6.6" height="4.4" viewBox="0 0 6.6 4.4"><path d="M0.500 3.800l2.800-2.800l2.800 2.800" fill="none" stroke="#3a3a3a" stroke-width="1.250"/></svg>
<div class="a " style="left:183.2px;top:183.3px;width:11.6px;height:12px;background:#cdcdcd;"></div>
<svg class="a" style="left:185.6px;top:257.4px" width="6.6" height="4.4" viewBox="0 0 6.6 4.4"><path d="M0.500 0.600l2.800 2.800l2.800-2.800" fill="none" stroke="#3a3a3a" stroke-width="1.250"/></svg>
<div class="a hdr" style="left:7.1px;top:271.5px;width:189px;height:11.2px;"></div>
<div class="t " style="left:11.1px;top:271.2px;font-size:9.8px;color:#000;">收藏夹</div>
<svg class="a" style="left:173px;top:273.2px" width="6.4" height="8" viewBox="0 0 6.4 8"><path d="M1.400 0.500h3.600M2 0.500v3.600M4.400 0.500v3.600M3.700 0.500v3.600M0.600 4.200h5.200M3.200 4.200v3.200" stroke="#111" stroke-width="0.900" fill="none"/></svg>
<div class="a " style="left:7.1px;top:284.6px;width:189.4px;height:120.2px;background:#fff;border:1px solid #dcdcdc;"></div>
<div class="t " style="left:11.8px;top:287.5px;font-size:9.8px;color:#000;">名称</div>
<div class="t " style="left:105.7px;top:287.5px;font-size:9.8px;color:#000;">路径</div>
<div class="a " style="left:101.2px;top:285.6px;width:1px;height:17.4px;background:#e4e4e4;"></div>
<div class="a " style="left:193.8px;top:285.6px;width:1px;height:17.4px;background:#e4e4e4;"></div>
<div class="a " style="left:197px;top:137.2px;width:2px;height:267.6px;background:linear-gradient(90deg,#dedede,#fafafa);"></div>
<svg class="a" style="left:0;top:0" width="710" height="505" viewBox="0 0 710 505"><circle cx="364.600" cy="229.900" r="77.100" fill="none" stroke="#f4f4f4" stroke-width="0.900"/><path d="M287.400 223.200V348.700M441.800 223.200V348.700M317.600 319H411.800" stroke="#f0f0f0" stroke-width="0.900" stroke-dasharray="1.500 1.700" fill="none"/><path d="M287.600 319l30-5.300v10.600zM441.600 319l-30-5.300v10.600z" fill="#fff"/><path d="M296 319h22M433 319h-22" stroke="#666" stroke-width="0.600" stroke-dasharray="1.500 1.700"/><rect x="283.9" y="219.7" width="7" height="7" fill="#ffee00" stroke="#1a2ad8" stroke-width="0.900"/><rect x="438.3" y="219.7" width="7" height="7" fill="#ffee00" stroke="#1a2ad8" stroke-width="0.900"/><rect x="283.9" y="345.2" width="7" height="7" fill="#ffee00" stroke="#1a2ad8" stroke-width="0.900"/><rect x="438.3" y="345.2" width="7" height="7" fill="#ffee00" stroke="#1a2ad8" stroke-width="0.900"/></svg>
<div class="a " style="left:651.2px;top:143.6px;width:7.7px;height:2.6px;background:#f0f0f0;"></div>
<svg class="a" style="left:663.3px;top:138.9px" width="8.4" height="7.4" viewBox="0 0 8.4 7.4"><rect x="3" y="0.500" width="4.800" height="3.600" fill="none" stroke="#e8e8e8" stroke-width="1"/><rect x="0.500" y="3" width="4.800" height="3.800" fill="#000" stroke="#e8e8e8" stroke-width="1"/></svg>
<svg class="a" style="left:675.2px;top:140.7px" width="8.4" height="6" viewBox="0 0 8.4 6"><path d="M0.600 0.500l7 5M7.600 0.500l-7 5" stroke="#f0f0f0" stroke-width="1.700"/></svg>
<svg class="a" style="left:692px;top:141.8px" width="6.6" height="4.4" viewBox="0 0 6.6 4.4"><path d="M0.500 3.800l2.800-2.800l2.800 2.800" fill="none" stroke="#3a3a3a" stroke-width="1.300"/></svg>
<div class="a " style="left:689.8px;top:251.9px;width:11.4px;height:13.3px;background:#cdcdcd;"></div>
<svg class="a" style="left:692px;top:379.4px" width="6.6" height="4.4" viewBox="0 0 6.6 4.4"><path d="M0.500 0.600l2.800 2.800l2.800-2.800" fill="none" stroke="#3a3a3a" stroke-width="1.300"/></svg>
<svg class="a" style="left:199px;top:389.2px" width="50" height="15.5" viewBox="0 0 50 15.5"><path d="M4.400 0h40.200l-5.300 13.800h-30.300z" fill="#cbcbcb" stroke="#6e6e6e" stroke-width="0.800"/></svg>
<div class="t " style="left:211.3px;top:389.3px;font-size:8.6px;color:#111;">Model</div>
<div class="a " style="left:505.4px;top:392.4px;width:13.4px;height:12.3px;background:#8d8d8d;border:1px solid #b0b0b0;border-radius:2.500px;"></div>
<svg class="a" style="left:509px;top:396.2px" width="6.4" height="4.4" viewBox="0 0 6.4 4.4"><path d="M0.400 0.600l2.800 2.800l2.800-2.800" fill="none" stroke="#fff6d0" stroke-width="1.500"/></svg>
<div class="a " style="left:524.8px;top:389.4px;width:164.9px;height:13.8px;background:linear-gradient(#fdfdfd,#f0f0f0 20%,#f0f0f0);"></div>
<svg class="a" style="left:529.6px;top:393px" width="4.4" height="6.6" viewBox="0 0 4.4 6.6"><path d="M3.800 0.500l-2.800 2.800l2.800 2.800" fill="none" stroke="#3a3a3a" stroke-width="1.300"/></svg>
<div class="a " style="left:596.8px;top:390.8px;width:12.8px;height:11px;background:#cdcdcd;"></div>
<svg class="a" style="left:680.4px;top:393px" width="4.4" height="6.6" viewBox="0 0 4.4 6.6"><path d="M0.600 0.500l2.800 2.800l-2.800 2.800" fill="none" stroke="#3a3a3a" stroke-width="1.300"/></svg>
<div class="a " style="left:689.7px;top:389.4px;width:11.5px;height:15.8px;background:linear-gradient(#c0c0c0,#909090);"></div>
<div class="a " style="left:6.5px;top:405.2px;width:694.7px;height:4px;background:linear-gradient(#d8d8d8,#f4f4f4 40%,#e8e8e8);"></div>
<div class="a hdr" style="left:7.1px;top:409.2px;width:694.1px;height:12.4px;border-right:none;border-radius:2px 0 0 2px;"></div>
<div class="t " style="left:11.3px;top:408.7px;font-size:9.8px;color:#000;">命令行</div>
<svg class="a" style="left:690.2px;top:411.2px" width="6.4" height="8" viewBox="0 0 6.4 8"><path d="M1.400 0.500h3.600M2 0.500v3.600M4.400 0.500v3.600M3.700 0.500v3.600M0.600 4.200h5.200M3.200 4.200v3.200" stroke="#111" stroke-width="0.900" fill="none"/></svg>
<div class="a " style="left:7.1px;top:421.6px;width:694.4px;height:44.6px;background:#fff;border-bottom:1px solid #8a8a8a;"></div>
<div class="t " style="left:8.4px;top:421.9px;font-size:9.6px;color:#111;">取消</div>
<div class="t " style="left:8.4px;top:433.9px;font-size:9.6px;color:#111;">取消Z</div>
<div class="a " style="left:688px;top:422px;width:12.4px;height:43.4px;background:#f0f0f0;"></div>
<svg class="a" style="left:690.9px;top:427.4px" width="6.6" height="4.4" viewBox="0 0 6.6 4.4"><path d="M0.500 3.800l2.800-2.800l2.800 2.800" fill="none" stroke="#3a3a3a" stroke-width="1.300"/></svg>
<div class="a " style="left:688.6px;top:440px;width:11.4px;height:12.3px;background:#cdcdcd;"></div>
<svg class="a" style="left:690.9px;top:456.8px" width="6.6" height="4.4" viewBox="0 0 6.6 4.4"><path d="M0.500 0.600l2.800 2.800l2.800-2.800" fill="none" stroke="#3a3a3a" stroke-width="1.300"/></svg>
<div class="a " style="left:7.1px;top:466.8px;width:694.4px;height:16.6px;background:#fff;border-bottom:1px solid #777;"></div>
<div class="a " style="left:7.1px;top:466.8px;width:43px;height:16.2px;background:#d3d7df;border-right:1px solid #b0b4bc;"></div>
<div class="t " style="left:12px;top:468.8px;font-size:9.8px;color:#000;">命令行:</div>
<div class="a " style="left:6.5px;top:483.4px;width:694.7px;height:0.8px;background:#555;"></div>
<div class="t " style="left:11.3px;top:484.1px;font-size:8.4px;color:#111;">New4.dxf</div>
<div class="a " style="left:220.9px;top:485px;width:1px;height:13px;background:#7c7c7c;"></div>
<div class="a " style="left:221.9px;top:485px;width:1px;height:13px;background:#cfcfcf;"></div>
<div class="a " style="left:547.3px;top:485px;width:1px;height:13px;background:#7c7c7c;"></div>
<div class="a " style="left:548.3px;top:485px;width:1px;height:13px;background:#cfcfcf;"></div>
<div class="a " style="left:639.1px;top:485px;width:1px;height:13px;background:#7c7c7c;"></div>
<div class="a " style="left:640.1px;top:485px;width:1px;height:13px;background:#cfcfcf;"></div>
<div class="a " style="left:296.8px;top:484.4px;width:15.199999999999989px;height:14px;background:linear-gradient(#c6c6c6,#b2b2b2 50%,#9a9a9a);border-left:1px solid #dcdcdc;border-right:1px solid #8e8e8e;"></div>
<div class="a " style="left:312.4px;top:484.4px;width:14.400000000000034px;height:14px;background:linear-gradient(#c6c6c6,#b2b2b2 50%,#9a9a9a);border-left:1px solid #dcdcdc;border-right:1px solid #8e8e8e;"></div>
<div class="a " style="left:327.2px;top:484.4px;width:15.199999999999989px;height:14px;background:linear-gradient(#c6c6c6,#b2b2b2 50%,#9a9a9a);border-left:1px solid #dcdcdc;border-right:1px solid #8e8e8e;"></div>
<div class="a " style="left:342.8px;top:484.4px;width:15.0px;height:14px;background:linear-gradient(#c6c6c6,#b2b2b2 50%,#9a9a9a);border-left:1px solid #dcdcdc;border-right:1px solid #8e8e8e;"></div>
<svg class="a" style="left:298px;top:484.6px" width="11" height="12" viewBox="0 0 11 12"><path d="M0.800 8.400v-4.200a3.900 3.900 0 0 1 7.800 0v4.200h-2.300v-4.200a1.600 1.600 0 0 0-3.200 0v4.200z" fill="#e04848"/><path d="M4.700 0.300a3.900 3.900 0 0 1 3.900 3.900v4.200h-2.300v-4.200a1.600 1.600 0 0 0-1.600-1.600z" fill="#3a74e8"/><path d="M0.600 7.600l2.600 3.400l4-6" stroke="#159a25" stroke-width="1.700" fill="none"/><circle cx="9.500" cy="10.400" r="1.100" fill="#d40000"/></svg>
<svg class="a" style="left:312px;top:484px" width="13" height="13" viewBox="0 0 13 13"><rect x="1.0" y="0.9" width="1.500" height="1.500" fill="#2a2a2a"/><rect x="2.5" y="0.9" width="0.800" height="1.500" fill="#e0e0d0"/><rect x="1.0" y="5.7" width="1.500" height="1.500" fill="#2a2a2a"/><rect x="2.5" y="5.7" width="0.800" height="1.500" fill="#e0e0d0"/><rect x="1.0" y="10.5" width="1.500" height="1.500" fill="#2a2a2a"/><rect x="2.5" y="10.5" width="0.800" height="1.500" fill="#e0e0d0"/><rect x="5.5" y="0.9" width="1.500" height="1.500" fill="#2a2a2a"/><rect x="7.0" y="0.9" width="0.800" height="1.500" fill="#e0e0d0"/><rect x="5.5" y="5.7" width="1.500" height="1.500" fill="#2a2a2a"/><rect x="7.0" y="5.7" width="0.800" height="1.500" fill="#e0e0d0"/><rect x="5.5" y="10.5" width="1.500" height="1.500" fill="#2a2a2a"/><rect x="7.0" y="10.5" width="0.800" height="1.500" fill="#e0e0d0"/><rect x="10.0" y="0.9" width="1.500" height="1.500" fill="#2a2a2a"/><rect x="11.5" y="0.9" width="0.800" height="1.500" fill="#e0e0d0"/><rect x="10.0" y="5.7" width="1.500" height="1.500" fill="#2a2a2a"/><rect x="11.5" y="5.7" width="0.800" height="1.500" fill="#e0e0d0"/><rect x="10.0" y="10.5" width="1.500" height="1.500" fill="#2a2a2a"/><rect x="11.5" y="10.5" width="0.800" height="1.500" fill="#e0e0d0"/></svg>
<svg class="a" style="left:328.4px;top:485.4px" width="12" height="11" viewBox="0 0 12 11"><path d="M5.300 0.600v8.400M0.800 8.700h9.800" stroke="#4a7fd8" stroke-width="1.100"/></svg>
<svg class="a" style="left:343.4px;top:484px" width="14" height="13" viewBox="0 0 14 13"><ellipse cx="5.400" cy="7" rx="4.400" ry="3.600" fill="#e4ecf8" stroke="#5a7ab0" stroke-width="0.800"/><path d="M1 7.400l3 3.800l5-6.400" stroke="#159a25" stroke-width="1.900" fill="none"/><path d="M5.800 7.200l7-6.800" stroke="#2a2a2a" stroke-width="1.100"/></svg>
<div class="t " style="left:361.2px;top:484.5px;font-size:8.5px;color:#111;">(-5.140071; 9.582107; 0)</div>
<div class="t " style="left:643.8px;top:484.5px;font-size:8.1px;color:#111;">297 x 210 x 0</div>
</body>
</html>
